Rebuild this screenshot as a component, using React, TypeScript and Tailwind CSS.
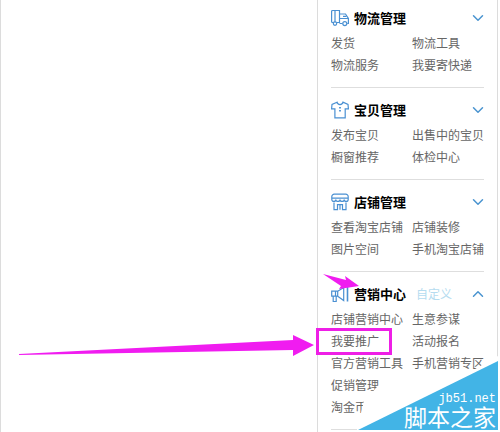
import type { ReactNode } from "react";
import { ChevronDown, ChevronUp } from "lucide-react";

type Section = {
  title: string;
  icon: ReactNode;
  links: string[];
  open?: boolean;
};

const iconProps = {
  viewBox: "0 0 18 18",
  fill: "none",
  stroke: "currentColor",
  strokeWidth: 1.2,
  className: "w-[18px] h-[18px] shrink-0 text-[#4a90d2]",
  "aria-hidden": true,
};

const TruckIcon = () => (
  <svg {...iconProps}>
    <path d="M2.5 1.5h6v12H6M2.5 13.5H1.6a1 1 0 0 1-1-1v-10a1 1 0 0 1 1-1h1M8.5 5h6l2.9 4.5v5h-1.2M8.5 14.5h3" />
    <path d="M4 2v11M9 9.5h8M12 7.3h3.5" />
    <circle cx="4" cy="14.6" r="1.7" fill="white" />
    <circle cx="13.8" cy="14.6" r="2" fill="white" />
  </svg>
);

const ShirtIcon = () => (
  <svg {...iconProps}>
    <path d="M6 1.2 1 3.5.6 7.8h3.3v9h10.3v-9h3.2L17 3.5l-5-2.3C11.5 4.3 6.5 4.3 6 1.2Z" />
    <path d="M9 6v1.5M9 9v1.5" strokeWidth="1.8" />
  </svg>
);

const ShopIcon = () => (
  <svg {...iconProps}>
    <path d="M3.5 1.2h11a2.5 2.5 0 0 1 2.7 2.6v2.7c0 2.6-4 2.6-4 0 0 2.6-4.2 2.6-4.2 0 0 2.6-4.2 2.6-4.2 0 0 2.6-4 2.6-4 0V3.8a2.5 2.5 0 0 1 2.7-2.6Z" />
    <path d="M1 5.2h16M3 9.5v7.2h3.5v-5h5v5H15V9.5M9 11.7v5" />
  </svg>
);

const MegaphoneIcon = () => (
  <svg {...iconProps}>
    <path d="M.7 6.2h6v5h-6zM6.7 6.2l6-3.7v13l-6-4.3M2.2 11.2v5.3h3v-5.3M4.5 6.2v5" />
    <path d="M16.5 1v15.5" strokeWidth="1.6" />
  </svg>
);

const sections: Section[] = [
  {
    title: "物流管理",
    icon: <TruckIcon />,
    links: ["发货", "物流工具", "物流服务", "我要寄快递"],
  },
  {
    title: "宝贝管理",
    icon: <ShirtIcon />,
    links: ["发布宝贝", "出售中的宝贝", "橱窗推荐", "体检中心"],
  },
  {
    title: "店铺管理",
    icon: <ShopIcon />,
    links: ["查看淘宝店铺", "店铺装修", "图片空间", "手机淘宝店铺"],
  },
  {
    title: "营销中心",
    icon: <MegaphoneIcon />,
    open: true,
    links: ["店铺营销中心", "生意参谋", "我要推广", "活动报名", "官方营销工具", "手机营销专区", "促销管理", "", "淘金币"],
  },
];

function MenuSection({ title, icon, links, open }: Section) {
  const Chevron = open ? ChevronUp : ChevronDown;
  return (
    <section className="border-b border-[#dedede] pt-[11px] pb-[11px] first:pt-[7px]">
      <div className="flex h-[22px] items-center">
        {icon}
        <h2 className="ml-[5px] text-[13px] font-bold text-black">{title}</h2>
        {open && (
          <a href="#custom" className="ml-[10px] text-[12px] text-[#b5dcf0]">
            自定义
          </a>
        )}
        <button type="button" aria-label={title} className="-mr-[3px] ml-auto text-[#4a94d0]">
          <Chevron size={18} strokeWidth={2} />
        </button>
      </div>
      <ul className="mt-[3px] grid grid-cols-[81px_1fr] text-[12px] leading-[22px] text-[#666]">
        {links.map((link, i) => (
          <li key={i} className="relative whitespace-nowrap">
            {link && <a href="#menu">{link}</a>}
            {/* Highlight frame */}
            {link === "我要推广" && (
              <span className="absolute -top-[2px] -left-[15px] h-[27px] w-[76px] border-3 border-[#ee1fe6]" />
            )}
          </li>
        ))}
      </ul>
    </section>
  );
}

export default function App() {
  return (
    <div className="flex min-h-screen justify-end overflow-hidden border-l border-[#dcdcdc] bg-white pr-[2px] font-['Noto_Sans_CJK_SC',sans-serif]">
      <aside className="relative w-[181px] border-x border-[#dcdcdc] px-[13px]">
        {sections.map((section) => (
          <MenuSection key={section.title} {...section} />
        ))}

        {/* Pointer arrows */}
        <svg
          viewBox="0 0 360 90"
          className="pointer-events-none absolute top-[270px] right-[137px] h-[90px] w-[360px]"
          fill="#f01cf0"
          aria-hidden="true"
        >
          <path d="M19 84 293 70V65L314 75 293 86V80L19 85Z" />
          <path d="M323 4 346 10 345 6 359 16 339 19 341 16Z" />
        </svg>

        {/* Corner badge */}
        <div className="absolute top-[356px] -right-px h-[76px] w-[141px]">
          <svg viewBox="0 0 141 76" className="absolute inset-0 h-full w-full" aria-hidden="true">
            <path d="M0 76V73L7 45 20 31 118 13 141 0V76Z" fill="white" />
            <path d="M1 74 141 5V74Z" fill="#42b4e6" />
          </svg>
          <div className="relative flex h-full flex-col items-end justify-end pr-[2px] pb-[6px] text-white">
            <span className="font-['Liberation_Mono',monospace] text-[12px] leading-[14px]">jb51.net</span>
            <span className="text-[23px] leading-5">脚本之家</span>
          </div>
        </div>
      </aside>
    </div>
  );
}
